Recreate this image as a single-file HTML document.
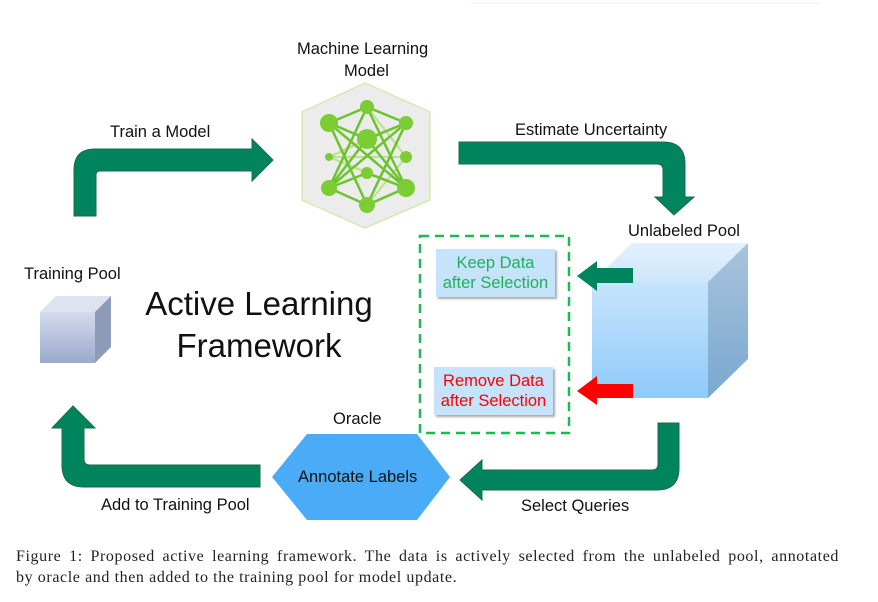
<!DOCTYPE html>
<html><head><meta charset="utf-8"><style>
html,body{margin:0;padding:0;background:#fff;}
body{width:878px;height:602px;position:relative;overflow:hidden;font-family:"Liberation Sans",sans-serif;}
.t{position:absolute;font-size:16.5px;color:#111;white-space:nowrap;line-height:18px;}
.cap{position:absolute;left:16px;font-family:"Liberation Serif",serif;font-size:16px;line-height:21px;color:#222;width:823px;letter-spacing:0.6px;white-space:nowrap;}
.box{position:absolute;background:#c5e3fb;box-shadow:2px 2px 2px #aaa;font-size:16.5px;text-align:center;line-height:20px;}
</style></head><body>
<svg width="878" height="602" style="position:absolute;left:0;top:0">
<defs>
<linearGradient id="uf" x1="0" y1="0" x2="0" y2="1"><stop offset="0" stop-color="#c8e4fc"/><stop offset="1" stop-color="#8ecafa"/></linearGradient>
<linearGradient id="ut" x1="0" y1="0" x2="0" y2="1"><stop offset="0" stop-color="#e4f1fd"/><stop offset="1" stop-color="#cfe6fb"/></linearGradient>
<linearGradient id="ur" x1="0" y1="0" x2="0" y2="1"><stop offset="0" stop-color="#a9c3dc"/><stop offset="1" stop-color="#79a8d0"/></linearGradient>
<linearGradient id="tf" x1="0" y1="0" x2="0" y2="1"><stop offset="0" stop-color="#d4dcec"/><stop offset="1" stop-color="#9aa9cc"/></linearGradient>
</defs>
<line x1="470" y1="3" x2="820" y2="3" stroke="#eee"/>
<g fill="#00845e" stroke="#1a6b45" stroke-width="1">
<path d="M74,216 L74,170 Q74,149 95,149 L252,149 L252,139 L273,160 L252,181 L252,171 L100,171 Q96,171 96,175 L96,216 Z"/>
<path d="M459,142 L663,142 Q685,142 685,164 L685,197 L694,197 L674,215 L655,197 L663,197 L663,170 Q663,164 657,164 L459,164 Z"/>
<path d="M679,423 L679,468 Q679,490 657,490 L482,490 L482,500 L460,480 L482,460 L482,470 L652,470 Q658,470 658,464 L658,423 Z"/>
<path d="M260,465 L90,465 Q84,465 84,459 L84,428 L95,428 L73,406 L52,428 L62,428 L62,465 Q62,487 84,487 L260,487 Z"/>
</g>
<rect x="420" y="236" width="149" height="197" fill="none" stroke="#1db954" stroke-width="2.5" stroke-dasharray="9,6"/>
<polygon points="592,282 632,243 748,243 708,282" fill="url(#ut)"/>
<polygon points="708,282 748,243 748,359 708,398" fill="url(#ur)"/>
<rect x="592" y="282" width="116" height="116" fill="url(#uf)"/>
<path d="M633,268 L597,268 L597,261 L577,276 L597,291 L597,283 L633,283 Z" fill="#00845e"/>
<path d="M633,384 L597,384 L597,376 L577,391 L597,405 L597,398 L633,398 Z" fill="#f00"/>
<polygon points="40,312 56,296 111,296 95,312" fill="#dde3f0"/>
<polygon points="95,312 111,296 111,347 95,363" fill="#8d9ab8"/>
<rect x="40" y="312" width="55" height="51" fill="url(#tf)"/>
<polygon points="272,477 307,434 417,434 450,477 417,520 307,520" fill="#4aabf7"/>
<polygon points="365,83 430,112 430,200 365,228 302,200 302,112" fill="#ececec" stroke="#d3ebb0" stroke-width="1.5"/>
<g stroke="#a9dc6c" stroke-width="2" opacity="0.7">
<line x1="329" y1="157" x2="406" y2="123"/><line x1="329" y1="157" x2="406" y2="188"/><line x1="329" y1="157" x2="367" y2="139"/><line x1="329" y1="157" x2="367" y2="173"/><line x1="406" y1="157" x2="367" y2="205"/><line x1="406" y1="157" x2="367" y2="107"/><line x1="329" y1="157" x2="406" y2="157"/>
</g>
<g stroke="#6cc42c" stroke-width="2.5">
<line x1="367" y1="107" x2="329" y2="123"/><line x1="367" y1="107" x2="406" y2="123"/><line x1="367" y1="107" x2="329" y2="188"/><line x1="367" y1="107" x2="406" y2="188"/>
<line x1="329" y1="123" x2="367" y2="139"/><line x1="406" y1="123" x2="367" y2="139"/><line x1="329" y1="123" x2="406" y2="188"/><line x1="406" y1="123" x2="329" y2="188"/>
<line x1="329" y1="123" x2="367" y2="205"/><line x1="406" y1="123" x2="367" y2="205"/>
<line x1="329" y1="188" x2="367" y2="173"/><line x1="406" y1="188" x2="367" y2="173"/><line x1="329" y1="188" x2="367" y2="205"/><line x1="406" y1="188" x2="367" y2="205"/>
<line x1="367" y1="139" x2="329" y2="188"/><line x1="367" y1="139" x2="406" y2="188"/>
</g>
<g fill="#7ccc34">
<circle cx="367" cy="107" r="7"/><circle cx="329" cy="123" r="9"/><circle cx="406" cy="123" r="7"/><circle cx="367" cy="139" r="10"/><circle cx="329" cy="157" r="4"/><circle cx="406" cy="157" r="6"/><circle cx="367" cy="173" r="6"/><circle cx="329" cy="188" r="8"/><circle cx="406" cy="188" r="9"/><circle cx="367" cy="205" r="8"/>
</g>
</svg>
<div class="t" style="left:297px;top:40px;">Machine Learning</div>
<div class="t" style="left:344px;top:62px;">Model</div>
<div class="t" style="left:110px;top:123px;">Train a Model</div>
<div class="t" style="left:515px;top:121px;">Estimate Uncertainty</div>
<div class="t" style="left:628px;top:222px;">Unlabeled Pool</div>
<div class="t" style="left:24px;top:265px;">Training Pool</div>
<div class="t" style="left:333px;top:410px;">Oracle</div>
<div class="t" style="left:298px;top:468px;">Annotate Labels</div>
<div class="t" style="left:101px;top:496px;">Add to Training Pool</div>
<div class="t" style="left:521px;top:497px;">Select Queries</div>
<div style="position:absolute;left:130px;top:283px;font-size:33px;line-height:42px;color:#111;text-align:center;width:258px;">Active Learning<br>Framework</div>
<div class="box" style="left:436px;top:249px;width:119px;height:48px;color:#1fb05a;padding-top:4px;box-sizing:border-box;">Keep Data<br>after Selection</div>
<div class="box" style="left:434px;top:367px;width:119px;height:48px;color:#f00;padding-top:4px;box-sizing:border-box;">Remove Data<br>after Selection</div>
<div class="cap" style="top:546px;text-align:justify;text-align-last:justify;">Figure 1: Proposed active learning framework. The data is actively selected from the unlabeled pool, annotated</div>
<div class="cap" style="top:567px;">by oracle and then added to the training pool for model update.</div>
</body></html>
